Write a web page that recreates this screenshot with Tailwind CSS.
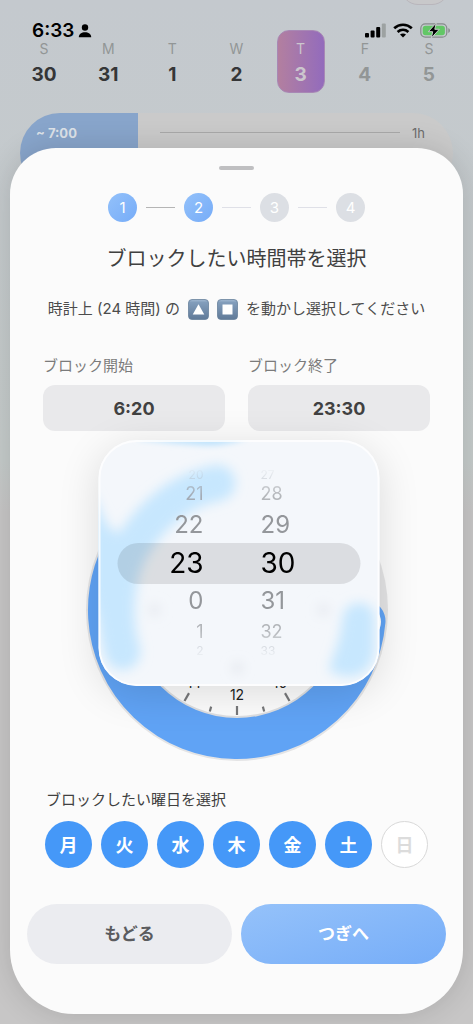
<!DOCTYPE html>
<html lang="ja">
<head>
<meta charset="utf-8">
<meta name="viewport" content="width=device-width, initial-scale=1">
<title>ブロックしたい時間帯を選択</title>
<script src="https://cdn.jsdelivr.net/npm/@tailwindcss/browser@4"></script>
</head>
<body class="grid min-h-screen grid-cols-1 overflow-x-hidden bg-linear-to-b from-[#c4c9ce] via-[#c5cbca] via-45% to-[#c7c6c6] to-50% font-['Inter','Noto_Sans_CJK_JP',sans-serif] text-[#454545]">

<!-- Schedule page behind the sheet -->
<div class="relative col-start-1 row-start-1 h-0 min-w-0">
  <div class="absolute right-6 -top-[29px] h-[34px] w-12 rounded-full border border-[#b9b6bc] bg-[#c8c8ca]"></div>
  <header class="flex h-[41px] items-end justify-between pr-[22px] pl-8">
    <div class="flex h-5 items-center gap-1 text-[19px] font-semibold leading-5 text-black">
      <span>6:33</span>
      <svg class="h-[14px] w-[14px]" viewBox="0 0 14 14" aria-hidden="true"><circle cx="7" cy="3.5" r="3.2"/><path d="M.8 13.2C.8 9.8 3.6 8.2 7 8.2s6.200 1.600 6.200 5z"/></svg>
    </div>
    <div class="flex h-5 items-center gap-[7px] pb-px">
      <svg class="h-[15px] w-[21px]" viewBox="0 0 21 15" aria-hidden="true"><rect x="0" y="10" width="4" height="4.500" rx="1"/><rect x="5.600" y="7.500" width="4" height="7" rx="1"/><rect x="11.200" y="4" width="4" height="10.500" rx="1"/><rect x="16.800" y=".5" width="4" height="14" rx="1" fill="#9da2a2"/></svg>
      <svg class="h-[15px] w-5" viewBox="0 0 20 15" fill="none" stroke="#000" stroke-width="2.700" aria-hidden="true"><path d="M1.200 5.200C6.200.6 13.800.6 18.800 5.200"/><path d="M4.600 8.900c3.200-2.800 7.600-2.800 10.800 0"/><path d="M10 14.500 7 11.500c1.600-1.500 4.400-1.500 6 0z" fill="#000" stroke="none"/></svg>
      <svg class="h-[17px] w-[31px]" viewBox="0 0 31 17" aria-hidden="true"><rect x=".8" y="1.800" width="26" height="13.400" rx="4.500" fill="none" stroke="#858a8a" stroke-width="1.200"/><rect x="2.700" y="3.700" width="22.200" height="9.600" rx="2.800" fill="#62c766"/><path d="M28.300 6.200c2.200.5 2.200 4.200 0 4.700z" fill="#858a8a"/><path d="M16.200 1 8.300 9.700h4.400L11.300 16l8-8.700h-4.500z" stroke="#c5cbca" stroke-width="1"/></svg>
    </div>
  </header>
  <div class="relative -mt-[11px] grid grid-cols-7 px-3 text-center text-sm leading-4 text-[#929696]">
    <div class="pt-[11px]"><div>S</div><div class="mt-1 text-[19px] font-bold leading-7 text-[#353637]">30</div></div>
    <div class="pt-[11px]"><div>M</div><div class="mt-1 text-[19px] font-bold leading-7 text-[#353637]">31</div></div>
    <div class="pt-[11px]"><div>T</div><div class="mt-1 text-[19px] font-bold leading-7 text-[#353637]">1</div></div>
    <div class="pt-[11px]"><div>W</div><div class="mt-1 text-[19px] font-bold leading-7 text-[#353637]">2</div></div>
    <div class="mx-auto h-[63px] w-12 rounded-xl border border-[#a888b5] bg-linear-to-r from-[#b37f9f] to-[#936bbc] pt-[10px] text-[#cbc6cd]"><div>T</div><div class="mt-1 text-[19px] font-bold leading-7">3</div></div>
    <div class="pt-[11px]"><div>F</div><div class="mt-1 text-[19px] font-bold leading-7">4</div></div>
    <div class="pt-[11px]"><div>S</div><div class="mt-1 text-[19px] font-bold leading-7">5</div></div>
  </div>
  <div class="mx-5 mt-5 flex h-20 overflow-hidden rounded-[40px] bg-[#cacaca] text-[13px] leading-5">
    <div class="w-[118px] bg-[#88a5cb] pt-[10px] pl-4 font-bold text-[#dde2e8]">~ 7:00</div>
    <div class="flex h-[39px] grow items-center gap-3 pr-7 pl-[22px] text-[#6c6c6c]"><div class="h-px grow bg-[#a9a9a9]"></div><span>1h</span></div>
  </div>
</div>

<!-- Bottom sheet -->
<main class="relative col-start-1 row-start-1 mx-[10px] mt-[148px] mb-[10px] min-w-0 rounded-t-[46px] rounded-b-[64px] bg-[#fbfbfb] pt-[18px] shadow-[0_0_30px_rgba(0,0,0,0.14)]">
  <div class="mx-auto h-1 w-[35px] rounded-full bg-[#bfbfc1]"></div>

  <ol class="mt-[23px] flex items-center justify-center gap-[9px] text-[15px] text-white">
    <li class="flex size-[29px] items-center justify-center rounded-full bg-linear-to-br from-[#93c1fa] to-[#76acf8] pt-0.5">1</li>
    <li class="h-px w-[29px] bg-[#b5b5b5]" aria-hidden="true"></li>
    <li class="flex size-[29px] items-center justify-center rounded-full bg-linear-to-br from-[#93c1fa] to-[#76acf8] pt-0.5" aria-current="step">2</li>
    <li class="h-px w-[29px] bg-[#dfe0e7]" aria-hidden="true"></li>
    <li class="flex size-[29px] items-center justify-center rounded-full bg-[#dcdfe4] pt-0.5">3</li>
    <li class="h-px w-[29px] bg-[#dfe0e7]" aria-hidden="true"></li>
    <li class="flex size-[29px] items-center justify-center rounded-full bg-[#dcdfe4] pt-0.5">4</li>
  </ol>

  <h1 class="mt-[23px] text-center text-xl leading-7 text-[#404040]">ブロックしたい時間帯を選択</h1>

  <p class="mt-6 flex items-center justify-center gap-2 text-[15px] leading-6 whitespace-nowrap text-[#4c4c4c]">
    <span>時計上 (24 時間) の</span>
    <svg class="size-[21px]" viewBox="0 0 21 21" role="img" aria-label="三角"><defs><linearGradient id="key" x1="0" y1="0" x2="0" y2="1"><stop offset="0" stop-color="#a4bad3"/><stop offset=".15" stop-color="#829dbb"/><stop offset="1" stop-color="#607a98"/></linearGradient></defs><rect x=".5" y=".5" width="20" height="20" rx="3.500" fill="url(#key)" stroke="#68819c" stroke-width=".8"/><path d="M10.500 5.300 16.300 15.500H4.700z" fill="#fff"/></svg>
    <svg class="size-[21px]" viewBox="0 0 21 21" role="img" aria-label="四角"><rect x=".5" y=".5" width="20" height="20" rx="3.500" fill="url(#key)" stroke="#68819c" stroke-width=".8"/><path d="M5.500 5.500h10v10h-10z" fill="#fff"/></svg>
    <span>を動かし選択してください</span>
  </p>

  <div class="mt-[33px] grid grid-cols-2 gap-x-[23px] px-[33px]">
    <div>
      <label for="start" class="block text-[15px] leading-6 text-[#7b7b7b]">ブロック開始</label>
      <button id="start" type="button" class="mt-[7px] h-[46px] w-full rounded-xl bg-[#e9e9eb] pt-0.5 text-lg font-bold text-[#414141]">6:20</button>
    </div>
    <div>
      <label for="end" class="block text-[15px] leading-6 text-[#7b7b7b]">ブロック終了</label>
      <button id="end" type="button" class="mt-[7px] h-[46px] w-full rounded-xl bg-[#e9e9eb] pt-0.5 text-lg font-bold text-[#414141]">23:30</button>
    </div>
  </div>

  <!-- 24-hour dial with the wheel picker on top -->
  <section class="relative mt-7 flex justify-center" aria-label="時計">
    <svg class="size-[302px]" viewBox="0 0 302 302" aria-hidden="true">
      <circle cx="151" cy="151" r="151" fill="#e4e4e5"/>
      <path d="M278.500 162A128 128 0 1 1 134.300 24.100" fill="none" stroke="#60a3f5" stroke-width="42" stroke-linecap="round"/>
      <circle cx="278" cy="163" r="17" fill="#fff"/>
      <circle cx="151" cy="151" r="108" fill="#dedfe1"/>
      <circle cx="151" cy="151" r="106" fill="#fcfcfc"/>
      <g stroke="#77787a" stroke-width="2.200">
        <path d="M151 247v9"/>
        <path d="M151 251v5" transform="rotate(15 151 151)"/>
        <path d="M151 251v5" transform="rotate(-15 151 151)"/>
        <path d="M151 247v9" transform="rotate(30 151 151)"/>
        <path d="M151 247v9" transform="rotate(-30 151 151)"/>
      </g>
      <g fill="#222" font-size="14" text-anchor="middle"><text x="151" y="241">12</text><text x="194" y="229">10</text><text x="108" y="229">14</text></g>
    </svg>

    <div class="absolute -top-[19px] left-1/2 ml-0.5 h-[246px] w-[281px] -translate-x-1/2 rounded-[38px] shadow-[0_8px_40px_rgba(0,0,0,0.13)]">
      <div class="relative h-full overflow-hidden rounded-[38px] bg-[#f4f7fb]">
        <svg class="absolute inset-0 size-full" viewBox="0 0 281 246" aria-hidden="true">
          <defs><filter id="soft" x="-30%" y="-30%" width="160%" height="160%"><feGaussianBlur stdDeviation="6"/></filter><filter id="fine" x="-30%" y="-100%" width="160%" height="300%"><feGaussianBlur stdDeviation="3"/></filter></defs>
          <g filter="url(#soft)">
            <path d="M119 43C82 50 54 74 35 104 16 134 14 180 24 212" fill="none" stroke="#c7e7fe" stroke-width="36" stroke-linecap="round"/>
            <path d="M-8 50C4 72 8 92 20 92L24 220 8 215-8 150z" fill="#c7e7fe"/>
            <path d="M244 178C246 158 276 158 276 178V210C274 238 248 242 230 230 236 212 242 200 244 178z" fill="#c7e7fe"/>
            <circle cx="139" cy="228" r="5" fill="#dfe2e8"/><circle cx="56" cy="170" r="6" fill="#e6e9ef"/><circle cx="225" cy="170" r="6" fill="#e6e9ef"/>
          </g>
          <path d="M40-3H150Q125 7 104 5 72 3 40-1z" fill="#b9e1fd" filter="url(#fine)"/>
        </svg>
        <div class="absolute inset-x-[19px] top-[103px] h-[41px] rounded-full bg-black/10"></div>
        <div class="absolute inset-x-0 top-[27px] grid h-[192px] grid-cols-2 mask-[linear-gradient(to_bottom,transparent,black_15%,black_85%,transparent)] text-[#94979b]">
          <ul role="listbox" aria-label="時" class="mr-[35px] flex flex-col items-end">
            <li role="option" class="h-4 text-xs leading-4 text-[#b4bac2]">20</li>
            <li role="option" class="h-[22px] text-lg leading-[22px] text-[#a3abb5]">21</li>
            <li role="option" class="h-[40px] text-2xl leading-[40px]">22</li>
            <li role="option" aria-selected="true" class="h-9 text-[28px] leading-9 text-black">23</li>
            <li role="option" class="h-[40px] text-2xl leading-[40px]">0</li>
            <li role="option" class="h-[22px] text-lg leading-[22px] text-[#b3b6ba]">1</li>
            <li role="option" class="h-4 text-xs leading-4 text-[#b4bac2]">2</li>
          </ul>
          <ul role="listbox" aria-label="分" class="ml-[22px] flex flex-col items-start">
            <li role="option" class="h-4 text-xs leading-4 text-[#b4bac2]">27</li>
            <li role="option" class="h-[22px] text-lg leading-[22px] text-[#b3b6ba]">28</li>
            <li role="option" class="h-[40px] text-2xl leading-[40px]">29</li>
            <li role="option" aria-selected="true" class="h-9 text-[28px] leading-9 text-black">30</li>
            <li role="option" class="h-[40px] text-2xl leading-[40px]">31</li>
            <li role="option" class="h-[22px] text-lg leading-[22px] text-[#b3b6ba]">32</li>
            <li role="option" class="h-4 text-xs leading-4 text-[#b4bac2]">33</li>
          </ul>
        </div>
        <div class="pointer-events-none absolute inset-0 rounded-[38px] border-2 border-white/80"></div>
      </div>
    </div>
  </section>

  <h2 class="mt-[27px] px-9 text-[15px] leading-6 text-[#404040]">ブロックしたい曜日を選択</h2>
  <div class="mt-[9px] flex justify-between px-[35px] text-lg font-bold text-white">
    <button type="button" aria-pressed="true" class="size-[47px] rounded-full bg-[#4598f8] pt-0.5">月</button>
    <button type="button" aria-pressed="true" class="size-[47px] rounded-full bg-[#4598f8] pt-0.5">火</button>
    <button type="button" aria-pressed="true" class="size-[47px] rounded-full bg-[#4598f8] pt-0.5">水</button>
    <button type="button" aria-pressed="true" class="size-[47px] rounded-full bg-[#4598f8] pt-0.5">木</button>
    <button type="button" aria-pressed="true" class="size-[47px] rounded-full bg-[#4598f8] pt-0.5">金</button>
    <button type="button" aria-pressed="true" class="size-[47px] rounded-full bg-[#4598f8] pt-0.5">土</button>
    <button type="button" aria-pressed="false" class="size-[47px] rounded-full border border-[#d9d9d9] bg-white pt-0.5 text-[#dcdcdc]">日</button>
  </div>

  <div class="mt-9 grid grid-cols-2 gap-[9px] px-[17px] pb-[49px] text-[17px] font-bold">
    <button type="button" class="h-[60px] rounded-[30px] bg-[#ebecf0] pt-0.5 text-[#5b5c5f]">もどる</button>
    <button type="button" class="h-[60px] rounded-[30px] bg-linear-to-br from-[#95c2fa] to-[#76adf8] pt-0.5 text-white">つぎへ</button>
  </div>
</main>
</body>
</html>
